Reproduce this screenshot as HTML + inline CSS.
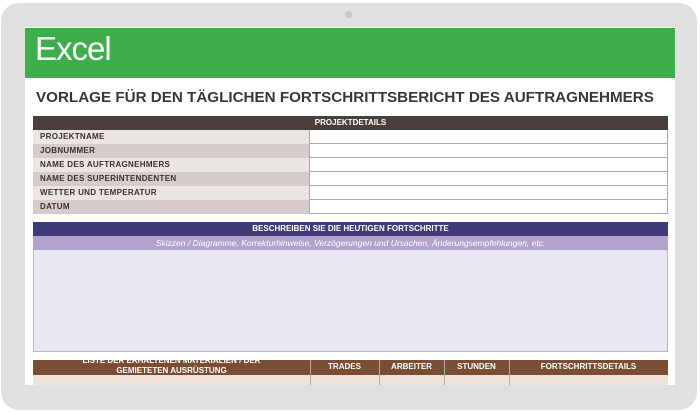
<!DOCTYPE html><html><head><style>
*{margin:0;padding:0;box-sizing:border-box}
body{width:700px;height:412px;background:#fff;position:relative;overflow:hidden;font-family:"Liberation Sans",sans-serif}
.a{position:absolute}
.frame{left:1px;top:3px;width:696px;height:407px;background:#e0e0e0;border-radius:18px}
.screen{left:25px;top:27px;width:650px;height:358px;background:#fff;overflow:hidden}
.green{left:25px;top:28px;width:650px;height:50px;background:#3dae4b}
.t{font-weight:bold;color:#fff;font-size:8px;text-align:center}
.row{left:33px;width:635px;height:14px;border-bottom:1px solid #b0a8a8}
.lab{position:absolute;left:0;top:0;width:277px;height:14px;font-size:8px;font-weight:bold;color:#3a3030;padding:2px 0 0 7px;border-right:1px solid #aaa;letter-spacing:0.3px}
</style></head><body>
<div class="a frame"></div>
<div class="a" style="left:345px;top:11px;width:7px;height:7px;border-radius:50%;background:#c8c8c8"></div>
<div class="a screen"></div>
<div class="a green"></div>
<div class="a" style="left:35px;top:30px;color:#fff;font-size:33px;letter-spacing:-1px">Excel</div>
<div class="a" style="left:36px;top:89px;font-size:15.2px;font-weight:bold;color:#3e3636;white-space:nowrap">VORLAGE FÜR DEN TÄGLICHEN FORTSCHRITTSBERICHT DES AUFTRAGNEHMERS</div>
<div class="a t" style="left:33px;top:116px;width:635px;height:14px;background:#4a3f3a;padding-top:2px">PROJEKTDETAILS</div>
<div class="a" style="left:33px;top:130px;width:635px;height:84px;border:1px solid #aaa;border-top:none"></div>
<div class="a row" style="top:130px"><div class="lab" style="background:#ebe5e3">PROJEKTNAME</div></div>
<div class="a row" style="top:144px"><div class="lab" style="background:#d7ccc9">JOBNUMMER</div></div>
<div class="a row" style="top:158px"><div class="lab" style="background:#ebe5e3">NAME DES AUFTRAGNEHMERS</div></div>
<div class="a row" style="top:172px"><div class="lab" style="background:#d7ccc9">NAME DES SUPERINTENDENTEN</div></div>
<div class="a row" style="top:186px"><div class="lab" style="background:#ebe5e3">WETTER UND TEMPERATUR</div></div>
<div class="a row" style="top:200px;border-bottom:none"><div class="lab" style="background:#d7ccc9">DATUM</div></div>
<div class="a t" style="left:33px;top:222px;width:635px;height:14px;background:#3f3a78;padding-top:2px">BESCHREIBEN SIE DIE HEUTIGEN FORTSCHRITTE</div>
<div class="a" style="left:33px;top:236px;width:635px;height:14px;background:#b1a3cc;color:#fff;font-size:8.5px;font-style:italic;text-align:center;padding-top:2px">Skizzen / Diagramme, Korrekturhinweise, Verzögerungen und Ursachen, Änderungsempfehlungen, etc.</div>
<div class="a" style="left:33px;top:250px;width:635px;height:102px;background:#e9e7f4;border:1px solid #b8b8c8;border-top:none"></div>
<div class="a" style="left:33px;top:360px;width:635px;height:15px;background:#7a4e34"></div>
<div class="a" style="left:33px;top:375px;width:635px;height:10px;background:#efe2da"></div>
<div class="a" style="left:33px;top:360px;width:277px;height:15px;overflow:hidden"><div class="t" style="margin-top:-4px;padding:0 25px;line-height:10px;font-size:8px">LISTE DER ERHALTENEN MATERIALIEN / DER GEMIETETEN AUSRÜSTUNG</div></div>
<div class="a t" style="left:310px;top:362px;width:69px">TRADES</div>
<div class="a t" style="left:379px;top:362px;width:65px">ARBEITER</div>
<div class="a t" style="left:444px;top:362px;width:65px">STUNDEN</div>
<div class="a t" style="left:509px;top:362px;width:159px">FORTSCHRITTSDETAILS</div>
<div class="a" style="left:310px;top:360px;width:1px;height:25px;background:#b9a9a0"></div>
<div class="a" style="left:379px;top:360px;width:1px;height:25px;background:#b9a9a0"></div>
<div class="a" style="left:444px;top:360px;width:1px;height:25px;background:#b9a9a0"></div>
<div class="a" style="left:509px;top:360px;width:1px;height:25px;background:#b9a9a0"></div>
<div class="a" style="left:0;top:385px;width:700px;height:27px;background:#fff"></div>
<div class="a" style="left:1px;top:300px;width:696px;height:110px;border-radius:0 0 18px 18px;clip-path:inset(85px 0 0 0);background:#e0e0e0"></div>
</body></html>
